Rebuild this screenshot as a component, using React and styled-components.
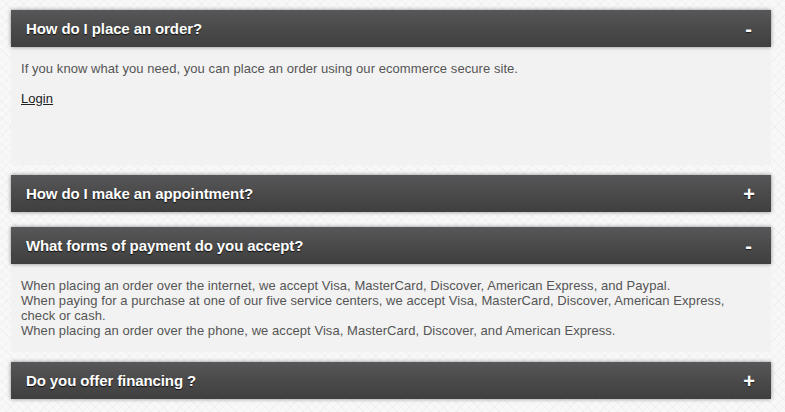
import React, { useState } from "react";
import styled, { createGlobalStyle } from "styled-components";

const GlobalStyle = createGlobalStyle`
body {
    margin: 0;
    font-family: "Liberation Sans", Arial, sans-serif;
    background-color: #f8f8f8;
    background-image:
        repeating-linear-gradient(45deg, rgba(0,0,0,0.025) 0 1px, transparent 1px 6px),
        repeating-linear-gradient(-45deg, rgba(0,0,0,0.025) 0 1px, transparent 1px 6px);
}
`

const faqs = [
    {
        id: 1,
        question: "How do I place an order?",
        answer: [
            "If you know what you need, you can place an order using our ecommerce secure site.",
        ],
        link: "Login",
        tall: true,
    },
    {
        id: 2,
        question: "How do I make an appointment?",
        answer: ["We can schedule a visit at any of our service centers."],
    },
    {
        id: 3,
        question: "What forms of payment do you accept?",
        answer: [
            "When placing an order over the internet, we accept Visa, MasterCard, Discover, American Express, and Paypal.",
            "When paying for a purchase at one of our five service centers, we accept Visa, MasterCard, Discover, American Express, check or cash.",
            "When placing an order over the phone, we accept Visa, MasterCard, Discover, and American Express.",
        ],
        lines: true,
    },
    {
        id: 4,
        question: "Do you offer financing ?",
        answer: ["Yes, ask us about our financing options."],
    },
]

function App() {
    const [abertos, setAbertos] = useState([1, 3])

    function alternar(id) {
        if (abertos.includes(id)) {
            setAbertos(abertos.filter((item) => item !== id))
        } else {
            setAbertos([...abertos, id])
        }
    }

    return (
        <>
            <GlobalStyle />
            <Accordion>
                {faqs.map((faq) => {
                    const aberto = abertos.includes(faq.id)
                    return (
                        <Item key={faq.id} aberto={aberto}>
                            <Header onClick={() => alternar(faq.id)}>
                                <Title>{faq.question}</Title>
                                <Toggle aberto={aberto}>{aberto ? "-" : "+"}</Toggle>
                            </Header>
                            {aberto && (
                                <Body tall={faq.tall}>
                                    {faq.lines ? (
                                        <Text>
                                            {faq.answer.map((linha, i) => (
                                                <React.Fragment key={i}>
                                                    {linha}
                                                    {i < faq.answer.length - 1 && <br />}
                                                </React.Fragment>
                                            ))}
                                        </Text>
                                    ) : (
                                        faq.answer.map((linha, i) => <Text key={i}>{linha}</Text>)
                                    )}
                                    {faq.link && (
                                        <Text>
                                            <Link href="#">{faq.link}</Link>
                                        </Text>
                                    )}
                                </Body>
                            )}
                        </Item>
                    )
                })}
            </Accordion>
        </>
    )
}

export default App

const Accordion = styled.div`
padding: 10px 14px 0 11px;
display: flex;
flex-direction: column;
`
const Item = styled.section`
margin-bottom: ${(props) => (props.aberto ? "10px" : "15px")};
`
const Header = styled.div`
height: 37px;
box-sizing: border-box;
padding: 0 16px 0 15px;
display: flex;
align-items: center;
justify-content: space-between;
background: linear-gradient(180deg, #575759 0%, #4a4a4b 50%, #3f3f40 100%);
box-shadow: 0 0 4px rgba(0, 0, 0, 0.45);
cursor: pointer;
position: relative;
z-index: 1;
`
const Title = styled.h3`
margin: 0;
color: #fff;
font-size: 15px;
font-weight: bold;
letter-spacing: -0.1px;
text-shadow: 0 1px 1px rgba(0, 0, 0, 0.8);
`
const Toggle = styled.span`
color: #fff;
font-size: 20px;
font-weight: bold;
line-height: 1;
margin-right: ${(props) => (props.aberto ? "3px" : "0")};
text-shadow: 0 1px 1px rgba(0, 0, 0, 0.6);
`
const Body = styled.div`
background: #f2f2f2;
padding: 14px 24px 14px 10px;
min-height: ${(props) => (props.tall ? "90px" : "0")};
color: #555;
font-size: 13px;
line-height: 15px;
letter-spacing: 0.06px;
`
const Text = styled.p`
margin: 0 0 15px;
&:last-child {
    margin-bottom: 0;
}
`
const Link = styled.a`
color: #222;
text-decoration: underline;
`
